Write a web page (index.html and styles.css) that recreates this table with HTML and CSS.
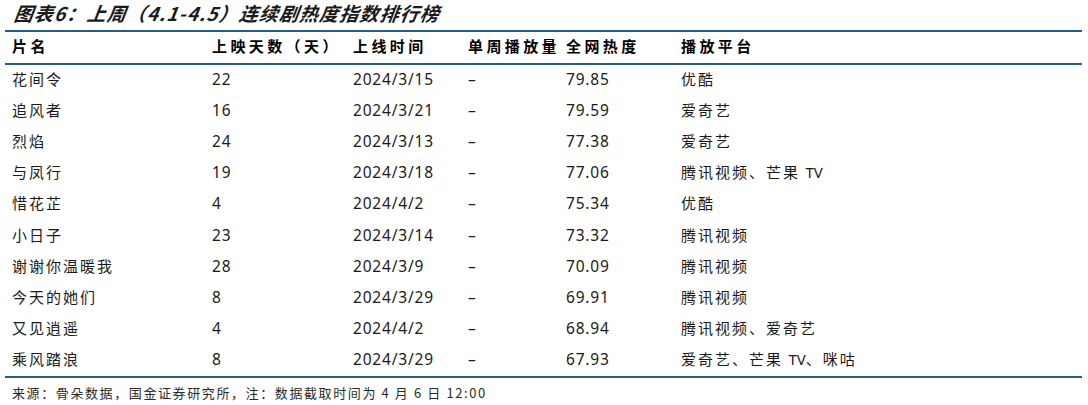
FILE: index.html
```html
<!DOCTYPE html>
<html lang="zh">
<head>
<meta charset="utf-8">
<link rel="stylesheet" href="styles.css">
</head>
<body>
<div class="page">
  <div class="title">图表6：上周（4.1-4.5）连续剧热度指数排行榜</div>
  <div class="table">
    <div class="row head">
      <div class="c c1">片名</div>
      <div class="c c2">上映天数（天）</div>
      <div class="c c3">上线时间</div>
      <div class="c c4">单周播放量</div>
      <div class="c c5">全网热度</div>
      <div class="c c6">播放平台</div>
    </div>
    <div class="body">
      <div class="row"><div class="c c1">花间令</div><div class="c c2 n">22</div><div class="c c3 n">2024/3/15</div><div class="c c4 n">–</div><div class="c c5 n">79.85</div><div class="c c6">优酷</div></div>
      <div class="row"><div class="c c1">追风者</div><div class="c c2 n">16</div><div class="c c3 n">2024/3/21</div><div class="c c4 n">–</div><div class="c c5 n">79.59</div><div class="c c6">爱奇艺</div></div>
      <div class="row"><div class="c c1">烈焰</div><div class="c c2 n">24</div><div class="c c3 n">2024/3/13</div><div class="c c4 n">–</div><div class="c c5 n">77.38</div><div class="c c6">爱奇艺</div></div>
      <div class="row"><div class="c c1">与凤行</div><div class="c c2 n">19</div><div class="c c3 n">2024/3/18</div><div class="c c4 n">–</div><div class="c c5 n">77.06</div><div class="c c6">腾讯视频、芒果 <span class="tv">TV</span></div></div>
      <div class="row"><div class="c c1">惜花芷</div><div class="c c2 n">4</div><div class="c c3 n">2024/4/2</div><div class="c c4 n">–</div><div class="c c5 n">75.34</div><div class="c c6">优酷</div></div>
      <div class="row"><div class="c c1">小日子</div><div class="c c2 n">23</div><div class="c c3 n">2024/3/14</div><div class="c c4 n">–</div><div class="c c5 n">73.32</div><div class="c c6">腾讯视频</div></div>
      <div class="row"><div class="c c1">谢谢你温暖我</div><div class="c c2 n">28</div><div class="c c3 n">2024/3/9</div><div class="c c4 n">–</div><div class="c c5 n">70.09</div><div class="c c6">腾讯视频</div></div>
      <div class="row"><div class="c c1">今天的她们</div><div class="c c2 n">8</div><div class="c c3 n">2024/3/29</div><div class="c c4 n">–</div><div class="c c5 n">69.91</div><div class="c c6">腾讯视频</div></div>
      <div class="row"><div class="c c1">又见逍遥</div><div class="c c2 n">4</div><div class="c c3 n">2024/4/2</div><div class="c c4 n">–</div><div class="c c5 n">68.94</div><div class="c c6">腾讯视频、爱奇艺</div></div>
      <div class="row"><div class="c c1">乘风踏浪</div><div class="c c2 n">8</div><div class="c c3 n">2024/3/29</div><div class="c c4 n">–</div><div class="c c5 n">67.93</div><div class="c c6">爱奇艺、芒果 <span class="tv">TV</span>、咪咕</div></div>
    </div>
  </div>
  <div class="source">来源：骨朵数据，国金证券研究所，注：数据截取时间为 4 月 6 日 12:00</div>
</div>
</body>
</html>
```

FILE: styles.css
```css
html, body {
  margin: 0;
  padding: 0;
  background: #ffffff;
}

.page {
  width: 1088px;
  height: 405px;
  font-family: "Noto Sans CJK SC", "Noto Sans", sans-serif;
  color: #111111;
}

.title {
  height: 30px;
  padding-left: 12px;
  font-size: 19px;
  font-weight: 700;
  font-style: italic;
  line-height: 26px;
  letter-spacing: 1.1px;
  color: #1a1a1a;
  transform: skewX(-8deg);
  transform-origin: left bottom;
}

.table {
  margin-left: 5px;
  width: 1077px;
  border-top: 2px solid #245e84;
  border-bottom: 2px solid #245e84;
}

.row {
  display: grid;
  grid-template-columns: 203px 143px 113px 99px 115px 404px;
  height: 31.1px;
  align-items: center;
}

.head {
  height: 31px;
  border-bottom: 2px solid #245e84;
  font-weight: 700;
  letter-spacing: 3.4px;
  font-size: 15px;
  color: #000000;
}

.c {
  white-space: nowrap;
  font-size: 15px;
  line-height: 20px;
  padding-bottom: 3px;
}

.body .c {
  letter-spacing: 2px;
  color: #1a1a1a;
}

.c1 { padding-left: 7px; }
.c2 { padding-left: 4px; }
.c3 { padding-left: 2px; }
.c4 { padding-left: 4px; }
.c5 { padding-left: 3px; }
.c6 { padding-left: 3px; }

.body .n {
  font-family: "Noto Sans", "DejaVu Sans", sans-serif;
  letter-spacing: 0.8px;
  font-size: 15.5px;
}

.tv {
  font-family: "Noto Sans", sans-serif;
  letter-spacing: 0;
}

.source {
  padding-left: 12px;
  padding-top: 6px;
  font-size: 13px;
  line-height: 18px;
  letter-spacing: 1.6px;
  color: #2a2a2a;
}
```
